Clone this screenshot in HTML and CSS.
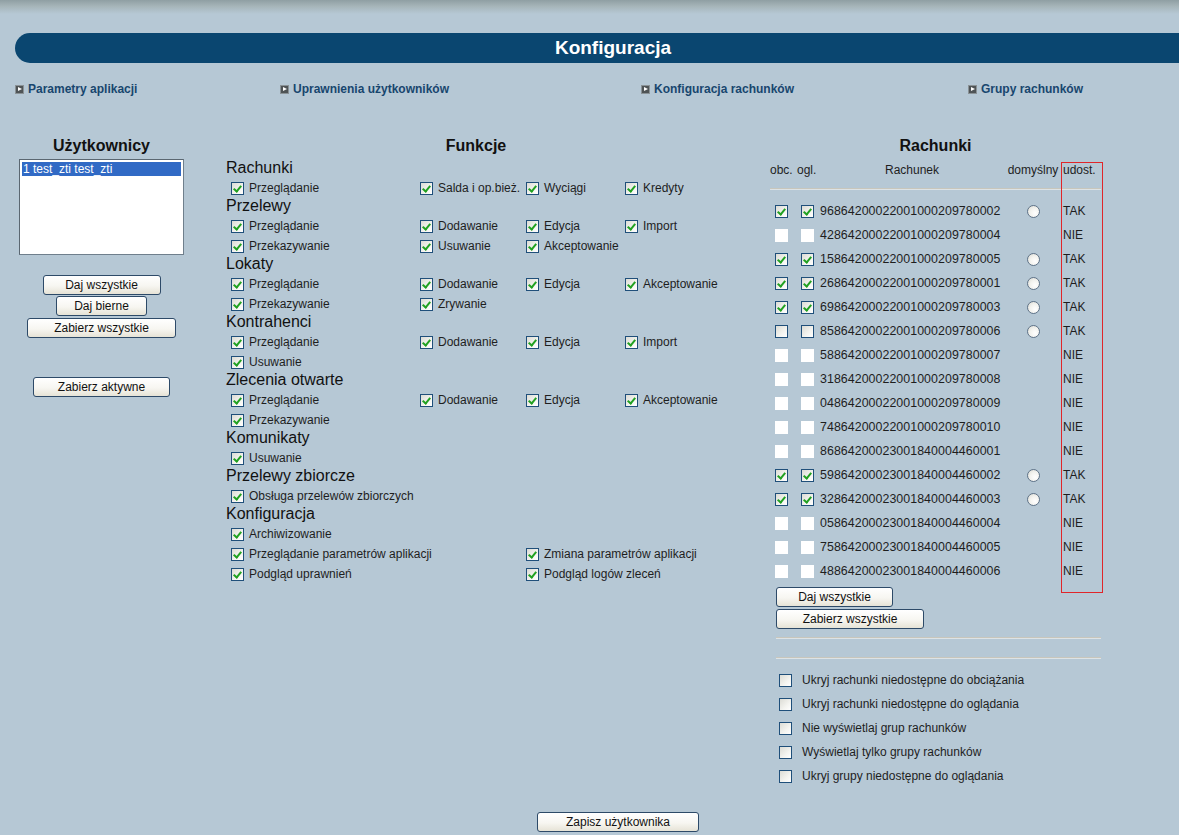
FILE: index.html
```html
<!DOCTYPE html>
<html lang="pl">
<head>
<meta charset="utf-8">
<title>Konfiguracja</title>
<link rel="stylesheet" href="styles.css">
</head>
<body>
<div class="page">
  <div class="topstrip"></div>
  <div class="header"><span class="header-title">Konfiguracja</span></div>

  <nav class="nav">
    <a class="nav-link"><span class="nav-ico"></span>Parametry aplikacji</a>
    <a class="nav-link"><span class="nav-ico"></span>Uprawnienia użytkowników</a>
    <a class="nav-link"><span class="nav-ico"></span>Konfiguracja rachunków</a>
    <a class="nav-link"><span class="nav-ico"></span>Grupy rachunków</a>
  </nav>

  <div class="main">
    <section class="col-users">
      <h2 class="col-head">Użytkownicy</h2>
      <div class="select">
        <div class="option selected">1 test_zti test_zti</div>
      </div>
      <div class="btn-stack">
        <button class="btn w118">Daj wszystkie</button>
        <button class="btn w91">Daj bierne</button>
        <button class="btn w149 mt1">Zabierz wszystkie</button>
        <button class="btn w137 mt38">Zabierz aktywne</button>
      </div>
    </section>

    <section class="col-funcs">
      <h2 class="col-head">Funkcje</h2>

      <div class="grp-title">Rachunki</div>
      <div class="frow">
        <label class="fcell"><span class="cb on"></span>Przeglądanie</label>
        <label class="fcell"><span class="cb on"></span>Salda i op.bież.</label>
        <label class="fcell"><span class="cb on"></span>Wyciągi</label>
        <label class="fcell"><span class="cb on"></span>Kredyty</label>
      </div>

      <div class="grp-title">Przelewy</div>
      <div class="frow">
        <label class="fcell"><span class="cb on"></span>Przeglądanie</label>
        <label class="fcell"><span class="cb on"></span>Dodawanie</label>
        <label class="fcell"><span class="cb on"></span>Edycja</label>
        <label class="fcell"><span class="cb on"></span>Import</label>
      </div>
      <div class="frow">
        <label class="fcell"><span class="cb on"></span>Przekazywanie</label>
        <label class="fcell"><span class="cb on"></span>Usuwanie</label>
        <label class="fcell"><span class="cb on"></span>Akceptowanie</label>
      </div>

      <div class="grp-title">Lokaty</div>
      <div class="frow">
        <label class="fcell"><span class="cb on"></span>Przeglądanie</label>
        <label class="fcell"><span class="cb on"></span>Dodawanie</label>
        <label class="fcell"><span class="cb on"></span>Edycja</label>
        <label class="fcell"><span class="cb on"></span>Akceptowanie</label>
      </div>
      <div class="frow">
        <label class="fcell"><span class="cb on"></span>Przekazywanie</label>
        <label class="fcell"><span class="cb on"></span>Zrywanie</label>
      </div>

      <div class="grp-title">Kontrahenci</div>
      <div class="frow">
        <label class="fcell"><span class="cb on"></span>Przeglądanie</label>
        <label class="fcell"><span class="cb on"></span>Dodawanie</label>
        <label class="fcell"><span class="cb on"></span>Edycja</label>
        <label class="fcell"><span class="cb on"></span>Import</label>
      </div>
      <div class="frow">
        <label class="fcell"><span class="cb on"></span>Usuwanie</label>
      </div>

      <div class="grp-title">Zlecenia otwarte</div>
      <div class="frow">
        <label class="fcell"><span class="cb on"></span>Przeglądanie</label>
        <label class="fcell"><span class="cb on"></span>Dodawanie</label>
        <label class="fcell"><span class="cb on"></span>Edycja</label>
        <label class="fcell"><span class="cb on"></span>Akceptowanie</label>
      </div>
      <div class="frow">
        <label class="fcell"><span class="cb on"></span>Przekazywanie</label>
      </div>

      <div class="grp-title">Komunikaty</div>
      <div class="frow">
        <label class="fcell"><span class="cb on"></span>Usuwanie</label>
      </div>

      <div class="grp-title">Przelewy zbiorcze</div>
      <div class="frow">
        <label class="fcell span2"><span class="cb on"></span>Obsługa przelewów zbiorczych</label>
      </div>

      <div class="grp-title">Konfiguracja</div>
      <div class="frow">
        <label class="fcell"><span class="cb on"></span>Archiwizowanie</label>
      </div>
      <div class="frow">
        <label class="fcell span2"><span class="cb on"></span>Przeglądanie parametrów aplikacji</label>
        <label class="fcell c3"><span class="cb on"></span>Zmiana parametrów aplikacji</label>
      </div>
      <div class="frow">
        <label class="fcell span2"><span class="cb on"></span>Podgląd uprawnień</label>
        <label class="fcell c3"><span class="cb on"></span>Podgląd logów zleceń</label>
      </div>
    </section>

    <section class="col-accts">
      <h2 class="col-head">Rachunki</h2>
      <div class="acc-head">
        <span class="ah-obc">obc.</span>
        <span class="ah-ogl">ogl.</span>
        <span class="ah-num">Rachunek</span>
        <span class="ah-def">domyślny</span>
        <span class="ah-ud">udost.</span>
      </div>
      <div class="rule rule-head"></div>

      <div class="acc-list">
        <div class="acc-row"><span class="a1"><span class="cb on"></span></span><span class="a2"><span class="cb on"></span></span><span class="a3">96864200022001000209780002</span><span class="a4"><span class="radio"></span></span><span class="a5">TAK</span></div>
        <div class="acc-row"><span class="a1"><span class="cb dis"></span></span><span class="a2"><span class="cb dis"></span></span><span class="a3">42864200022001000209780004</span><span class="a4"></span><span class="a5">NIE</span></div>
        <div class="acc-row"><span class="a1"><span class="cb on"></span></span><span class="a2"><span class="cb on"></span></span><span class="a3">15864200022001000209780005</span><span class="a4"><span class="radio"></span></span><span class="a5">TAK</span></div>
        <div class="acc-row"><span class="a1"><span class="cb on"></span></span><span class="a2"><span class="cb on"></span></span><span class="a3">26864200022001000209780001</span><span class="a4"><span class="radio"></span></span><span class="a5">TAK</span></div>
        <div class="acc-row"><span class="a1"><span class="cb on"></span></span><span class="a2"><span class="cb on"></span></span><span class="a3">69864200022001000209780003</span><span class="a4"><span class="radio"></span></span><span class="a5">TAK</span></div>
        <div class="acc-row"><span class="a1"><span class="cb"></span></span><span class="a2"><span class="cb"></span></span><span class="a3">85864200022001000209780006</span><span class="a4"><span class="radio"></span></span><span class="a5">TAK</span></div>
        <div class="acc-row"><span class="a1"><span class="cb dis"></span></span><span class="a2"><span class="cb dis"></span></span><span class="a3">58864200022001000209780007</span><span class="a4"></span><span class="a5">NIE</span></div>
        <div class="acc-row"><span class="a1"><span class="cb dis"></span></span><span class="a2"><span class="cb dis"></span></span><span class="a3">31864200022001000209780008</span><span class="a4"></span><span class="a5">NIE</span></div>
        <div class="acc-row"><span class="a1"><span class="cb dis"></span></span><span class="a2"><span class="cb dis"></span></span><span class="a3">04864200022001000209780009</span><span class="a4"></span><span class="a5">NIE</span></div>
        <div class="acc-row"><span class="a1"><span class="cb dis"></span></span><span class="a2"><span class="cb dis"></span></span><span class="a3">74864200022001000209780010</span><span class="a4"></span><span class="a5">NIE</span></div>
        <div class="acc-row"><span class="a1"><span class="cb dis"></span></span><span class="a2"><span class="cb dis"></span></span><span class="a3">86864200023001840004460001</span><span class="a4"></span><span class="a5">NIE</span></div>
        <div class="acc-row"><span class="a1"><span class="cb on"></span></span><span class="a2"><span class="cb on"></span></span><span class="a3">59864200023001840004460002</span><span class="a4"><span class="radio"></span></span><span class="a5">TAK</span></div>
        <div class="acc-row"><span class="a1"><span class="cb on"></span></span><span class="a2"><span class="cb on"></span></span><span class="a3">32864200023001840004460003</span><span class="a4"><span class="radio"></span></span><span class="a5">TAK</span></div>
        <div class="acc-row"><span class="a1"><span class="cb dis"></span></span><span class="a2"><span class="cb dis"></span></span><span class="a3">05864200023001840004460004</span><span class="a4"></span><span class="a5">NIE</span></div>
        <div class="acc-row"><span class="a1"><span class="cb dis"></span></span><span class="a2"><span class="cb dis"></span></span><span class="a3">75864200023001840004460005</span><span class="a4"></span><span class="a5">NIE</span></div>
        <div class="acc-row"><span class="a1"><span class="cb dis"></span></span><span class="a2"><span class="cb dis"></span></span><span class="a3">48864200023001840004460006</span><span class="a4"></span><span class="a5">NIE</span></div>
      </div>

      <div class="acc-btns">
        <button class="btn w117">Daj wszystkie</button>
        <button class="btn w148">Zabierz wszystkie</button>
      </div>
      <div class="rule rule-a"></div>
      <div class="rule rule-b"></div>

      <div class="opts">
        <label class="opt"><span class="cb"></span>Ukryj rachunki niedostępne do obciążania</label>
        <label class="opt"><span class="cb"></span>Ukryj rachunki niedostępne do oglądania</label>
        <label class="opt"><span class="cb"></span>Nie wyświetlaj grup rachunków</label>
        <label class="opt"><span class="cb"></span>Wyświetlaj tylko grupy rachunków</label>
        <label class="opt"><span class="cb"></span>Ukryj grupy niedostępne do oglądania</label>
      </div>

      <div class="red-frame"></div>
    </section>
  </div>

  <div class="footer">
    <button class="btn w162">Zapisz użytkownika</button>
  </div>
</div>
</body>
</html>
```

FILE: styles.css
```css
* { box-sizing: border-box; }

html, body {
  margin: 0;
  padding: 0;
  background: #ffffff;
}

body {
  font-family: "Liberation Sans", Arial, sans-serif;
  font-size: 12px;
  color: #1e1e1e;
}

.page {
  width: 1179px;
  height: 835px;
  background: #b6c8d5;
  overflow: hidden;
}

.topstrip {
  height: 14px;
  background: linear-gradient(#8f9fa3 0%, #a6b5b9 45%, #b6c8d5 100%);
}

.header {
  margin: 19px 0 0 15px;
  height: 30px;
  background: #0a4670;
  border-radius: 15px 0 0 15px;
  display: flex;
  align-items: center;
  justify-content: center;
  padding-left: 32px;
}

.header-title {
  color: #ffffff;
  font-weight: bold;
  font-size: 19px;
}

.nav {
  margin-top: 18px;
  padding-left: 15px;
  display: grid;
  grid-template-columns: 265px 361px 327px auto;
  height: 16px;
  line-height: 16px;
}

.nav-link {
  color: #18466e;
  font-weight: bold;
  font-size: 12px;
  display: flex;
  align-items: center;
  white-space: nowrap;
}

.nav-ico {
  width: 9px;
  height: 9px;
  background: #4f5456;
  border: 1px solid #8a9296;
  margin-right: 4px;
  position: relative;
  flex: none;
}

.nav-ico::after {
  content: "";
  position: absolute;
  left: 2px;
  top: 1px;
  border-left: 4px solid #ffffff;
  border-top: 2.5px solid transparent;
  border-bottom: 2.5px solid transparent;
}

.main {
  margin-top: 39px;
  display: flex;
  align-items: flex-start;
}

.col-head {
  margin: 0;
  font-size: 16px;
  font-weight: bold;
  line-height: 20px;
  text-align: center;
  color: #111;
}

/* Users column */
.col-users {
  margin-left: 15px;
  width: 173px;
}

.select {
  margin: 3px auto 0;
  width: 165px;
  height: 96px;
  background: #ffffff;
  border: 1px solid #6f7f8c;
  border-top-color: #5b6771;
  border-left-color: #5b6771;
  padding: 2px 2px;
}

.option {
  height: 14px;
  line-height: 14px;
  padding-left: 1px;
  font-size: 12px;
}

.option.selected {
  background: #316ac5;
  color: #ffffff;
}

.btn-stack {
  margin-top: 20px;
  display: flex;
  flex-direction: column;
  align-items: center;
  gap: 1px;
}

.btn {
  height: 20px;
  padding: 0;
  font-family: "Liberation Sans", Arial, sans-serif;
  font-size: 12px;
  color: #111;
  background: linear-gradient(#ffffff 0%, #f7f6f1 55%, #e6e3d6 100%);
  border: 1px solid #2d4a68;
  border-radius: 3px;
  text-align: center;
  line-height: 17px;
  cursor: pointer;
}

.w91 { width: 91px; }
.w117 { width: 117px; }
.w118 { width: 118px; }
.w137 { width: 137px; }
.w148 { width: 148px; }
.w149 { width: 149px; }
.w162 { width: 162px; }
.mt1 { margin-top: 1px; }
.mt38 { margin-top: 38px; }

/* Functions column */
.col-funcs {
  margin-left: 38px;
  width: 500px;
}

.grp-title {
  font-size: 16px;
  line-height: 18px;
  height: 18px;
  color: #111;
}

.col-funcs .col-head + .grp-title {
  margin-top: 3px;
}

.frow {
  display: grid;
  grid-template-columns: 189px 106px 99px 1fr;
  height: 20px;
  padding-left: 5px;
}

.fcell {
  display: flex;
  align-items: center;
  white-space: nowrap;
  font-size: 12px;
  padding-top: 2px;
}

.fcell .cb { margin-right: 5px; }

.span2 { grid-column: span 2; }
.c3 { grid-column: 3; }

/* Checkbox */
.cb {
  display: inline-block;
  flex: none;
  width: 13px;
  height: 13px;
  border: 1px solid #1f4f7a;
  background: linear-gradient(135deg, #dcdcd5 0%, #f4f4f0 60%, #ffffff 100%);
  position: relative;
}

.cb.on::after {
  content: "";
  position: absolute;
  left: 3px;
  top: 1px;
  width: 3px;
  height: 6px;
  border-right: 2px solid #21a121;
  border-bottom: 2px solid #21a121;
  transform: rotate(40deg);
}

.cb.dis {
  border-color: #ffffff;
  background: #ffffff;
}

/* Radio */
.radio {
  display: inline-block;
  width: 13px;
  height: 13px;
  border-radius: 50%;
  border: 1px solid #5f7388;
  background: radial-gradient(circle at 65% 65%, #ffffff 0%, #f2f2ee 50%, #d8d8d0 100%);
}

/* Accounts column */
.col-accts {
  margin-left: 44px;
  width: 331px;
  position: relative;
}

.acc-head {
  margin-top: 4px;
  display: grid;
  grid-template-columns: 27px 22px 186px 56px 40px;
  height: 20px;
  line-height: 20px;
  font-size: 12px;
  white-space: nowrap;
}

.ah-num, .ah-def { text-align: center; }
.ah-ud { padding-left: 2px; }

.rule {
  height: 2px;
  border-top: 1px solid #c8c6bc;
  border-bottom: 1px solid #dde3e6;
}

.rule-head { margin-top: 8px; }

.acc-list { margin-top: 9px; }

.acc-row {
  display: grid;
  grid-template-columns: 27px 22px 186px 56px 40px;
  height: 24px;
  align-items: center;
  font-size: 12px;
  white-space: nowrap;
}

.a1 { padding-left: 5px; display: flex; }
.a2 { padding-left: 4px; display: flex; }
.a3 { padding-left: 1px; font-size: 12.4px; letter-spacing: 0.05px; }
.a4 { display: flex; justify-content: center; }
.a5 { padding-left: 2px; }

.acc-btns {
  margin-top: 4px;
  padding-left: 6px;
  display: flex;
  flex-direction: column;
  align-items: flex-start;
  gap: 2px;
}

.rule-a { margin: 8px 0 0 6px; }
.rule-b { margin: 18px 0 0 6px; }

.opts {
  margin-top: 9px;
  padding-left: 9px;
}

.opt {
  display: flex;
  align-items: center;
  height: 24px;
  font-size: 12px;
  white-space: nowrap;
}

.opt .cb { margin-right: 10px; }

.red-frame {
  position: absolute;
  left: 291px;
  top: 26px;
  width: 42px;
  height: 431px;
  border: 1px solid #e0252a;
  pointer-events: none;
}

.footer {
  margin-top: 24px;
  padding-left: 537px;
}
```
